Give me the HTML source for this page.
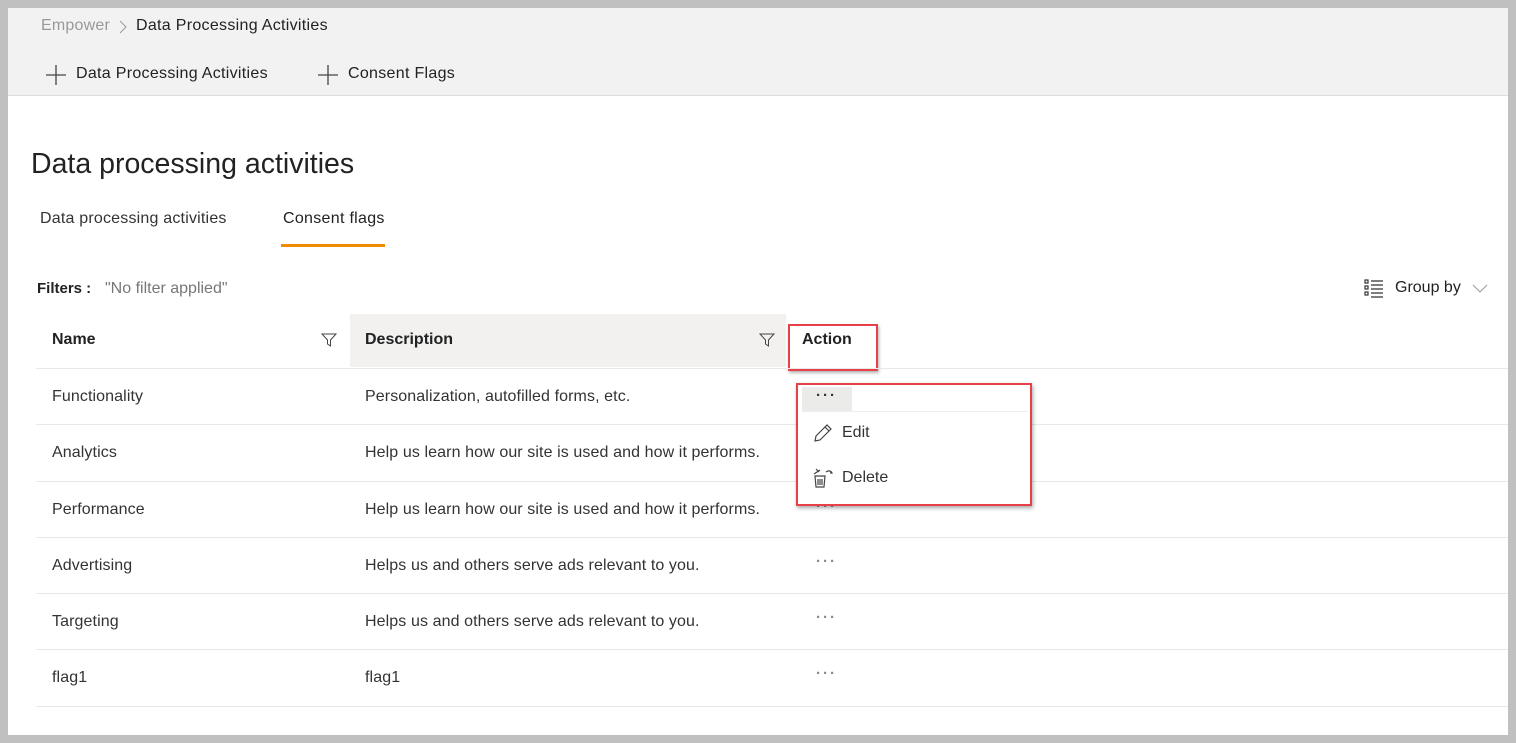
<!DOCTYPE html>
<html><head><style>
*{margin:0;padding:0;box-sizing:border-box}
body{width:1516px;height:743px;background:#c0c0c0;font-family:"Liberation Sans",sans-serif;position:relative;overflow:hidden;color:#222}
#c{position:absolute;left:8px;top:8px;width:1500px;height:727px;background:#fff;overflow:hidden}
.a{position:absolute;white-space:nowrap}
#hd{position:absolute;left:0;top:0;width:1500px;height:88px;background:#f2f2f2;border-bottom:1px solid #ddd}
.t{font-size:16px;color:#333;letter-spacing:.1px}
.line{position:absolute;left:28px;width:1472px;height:1px;background:#e8e8e8}
.dots{position:absolute;font-size:15px;font-weight:bold;color:#888;letter-spacing:2px}
</style></head><body>
<div id="c">
<div id="hd">
<div class="a" style="left:33px;top:9px;font-size:16px;color:#999;letter-spacing:.2px">Empower</div>
<svg class="a" style="left:111px;top:12px" width="8" height="14"><path d="M1 1l6 6-6 6" stroke="#999" fill="none"/></svg>
<div class="a" style="left:128px;top:9px;font-size:16px;color:#222;letter-spacing:.3px">Data Processing Activities</div>
<svg class="a" style="left:37px;top:56px" width="22" height="22"><path d="M11 1v20M1 11h20" stroke="#444" stroke-width="1.3"/></svg>
<div class="a" style="left:68px;top:57px;font-size:16px;color:#222;letter-spacing:.3px">Data Processing Activities</div>
<svg class="a" style="left:309px;top:56px" width="22" height="22"><path d="M11 1v20M1 11h20" stroke="#444" stroke-width="1.3"/></svg>
<div class="a" style="left:340px;top:57px;font-size:16px;color:#222;letter-spacing:.3px">Consent Flags</div>
</div>
<div class="a" style="left:23px;top:140px;font-size:28.5px;color:#222">Data processing activities</div>
<div class="a" style="left:32px;top:202px;font-size:16px;color:#333;letter-spacing:.2px">Data processing activities</div>
<div class="a" style="left:275px;top:202px;font-size:16px;color:#222;letter-spacing:.3px">Consent flags</div>
<div class="a" style="left:273px;top:236px;width:104px;height:3px;background:#f08a00"></div>
<div class="a" style="left:29px;top:272px;font-size:15px;font-weight:bold;color:#222">Filters :</div>
<div class="a" style="left:97px;top:272px;font-size:16px;color:#777">"No filter applied"</div>
<svg class="a" style="left:1356px;top:271px" width="20" height="20"><g fill="none" stroke="#333" stroke-width="1.2"><rect x="1" y="1" width="3" height="3"/><rect x="1" y="7" width="3" height="3"/><rect x="1" y="13" width="3" height="3"/><path d="M7 2h12M7 6h12M7 10h12M7 14h12M7 18h12" /></g></svg>
<div class="a" style="left:1387px;top:271px;font-size:16px;color:#222">Group by</div>
<svg class="a" style="left:1464px;top:276px" width="16" height="10"><path d="M1 1l7 7 7-7" stroke="#999" fill="none"/></svg>
<div class="a" style="left:342px;top:306px;width:436px;height:53px;background:#f2f1f0"></div>
<div class="a" style="left:44px;top:323px;font-size:16px;font-weight:bold;color:#222">Name</div>
<svg class="a" style="left:313px;top:324px" width="16" height="16"><path d="M1 2h14l-5.5 6v6l-3-2V8z" fill="none" stroke="#444"/></svg>
<div class="a" style="left:357px;top:323px;font-size:16px;font-weight:bold;color:#222">Description</div>
<svg class="a" style="left:751px;top:324px" width="16" height="16"><path d="M1 2h14l-5.5 6v6l-3-2V8z" fill="none" stroke="#444"/></svg>
<div class="a" style="left:794px;top:323px;font-size:16px;font-weight:bold;color:#222">Action</div>
<div class="a" style="left:780px;top:316px;width:90px;height:47px;border:2px solid #e84048;box-shadow:1px 2px 3px rgba(0,0,0,.3)"></div>
<div class="line" style="top:360px"></div>
<div class="line" style="top:416px"></div>
<div class="line" style="top:473px"></div>
<div class="line" style="top:529px"></div>
<div class="line" style="top:585px"></div>
<div class="line" style="top:641px"></div>
<div class="line" style="top:698px"></div>
<div class="a t" style="left:44px;top:380px">Functionality</div>
<div class="a t" style="left:357px;top:380px">Personalization, autofilled forms, etc.</div>
<div class="a t" style="left:44px;top:436px">Analytics</div>
<div class="a t" style="left:357px;top:436px">Help us learn how our site is used and how it performs.</div>
<div class="a t" style="left:44px;top:493px">Performance</div>
<div class="a t" style="left:357px;top:493px">Help us learn how our site is used and how it performs.</div>
<div class="a t" style="left:44px;top:549px">Advertising</div>
<div class="a t" style="left:357px;top:549px">Helps us and others serve ads relevant to you.</div>
<div class="a t" style="left:44px;top:605px">Targeting</div>
<div class="a t" style="left:357px;top:605px">Helps us and others serve ads relevant to you.</div>
<div class="a t" style="left:44px;top:661px">flag1</div>
<div class="a t" style="left:357px;top:661px">flag1</div>
<div class="dots" style="left:808px;top:545px">···</div>
<div class="dots" style="left:808px;top:601px">···</div>
<div class="dots" style="left:808px;top:657px">···</div>
<div class="dots" style="left:808px;top:490px">···</div>
<div class="a" style="left:788px;top:375px;width:236px;height:123px;border:2px solid #e84048;box-shadow:1px 2px 4px rgba(0,0,0,.35);background:#fff">
<div class="a" style="left:4px;top:2px;width:50px;height:24px;background:#ebebea"></div>
<div class="dots" style="left:18px;top:2px;color:#333">···</div>
<div class="a" style="left:4px;top:26px;width:226px;height:1px;background:#eee"></div>
<svg class="a" style="left:14px;top:37px" width="22" height="22"><path d="M3 19l1-5L15 3l4 4L8 18z M13 5l4 4" fill="none" stroke="#444" stroke-width="1.2"/></svg>
<div class="a" style="left:44px;top:39px;font-size:16px;color:#333">Edit</div>
<svg class="a" style="left:14px;top:82px" width="24" height="22"><g fill="none" stroke="#444" stroke-width="1.2"><path d="M3 9h10l-1 11H4z M6 12v6M8 12v6M10 12v6 M2 7l6-4 M4 2l3 3 M14 5c3-2 5-1 6 1l-2 0"/></g></svg>
<div class="a" style="left:44px;top:84px;font-size:16px;color:#333">Delete</div>
</div>
</div>
</body></html>
